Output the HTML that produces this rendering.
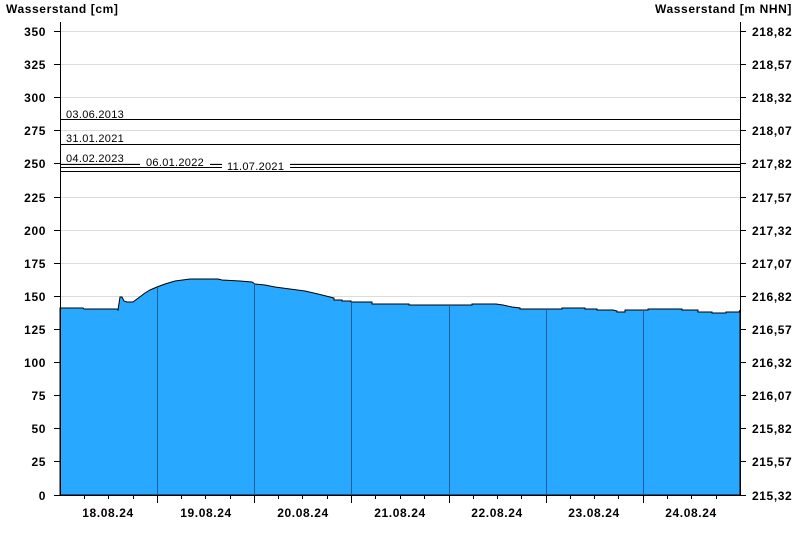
<!DOCTYPE html>
<html><head><meta charset="utf-8"><style>
html,body{margin:0;padding:0;background:#fff;width:800px;height:550px;overflow:hidden}
svg{display:block;font-family:"Liberation Sans",sans-serif}
.b{font-weight:bold;font-size:12px;fill:#000;letter-spacing:0.6px}
.t{font-size:11px;fill:#000;letter-spacing:0.3px}
</style></head><body>
<svg width="800" height="550" viewBox="0 0 800 550">
<g stroke="#dcdcdc" stroke-width="1">
<line x1="60" y1="31.5" x2="740" y2="31.5"/><line x1="60" y1="64.5" x2="740" y2="64.5"/>
<line x1="60" y1="97.5" x2="740" y2="97.5"/><line x1="60" y1="130.5" x2="740" y2="130.5"/>
<line x1="60" y1="163.5" x2="740" y2="163.5"/><line x1="60" y1="197.5" x2="740" y2="197.5"/>
<line x1="60" y1="230.5" x2="740" y2="230.5"/><line x1="60" y1="263.5" x2="740" y2="263.5"/>
<line x1="60" y1="296.5" x2="740" y2="296.5"/>
</g>
<path fill="#29a8ff" stroke="#000" stroke-width="1" d="M60,495 L60,308 L83,308 L84,309 L117,309 L118,310 L120,297 L122,297 L124,301 L127,302 L133,302 L137,299 L141,296 L145,293 L150,290 L157,287 L165,284 L175,281 L190,279 L218,279 L222,280 L240,281 L252,282 L255,284 L265,285 L275,287 L290,289 L305,291 L318,294 L330,297 L334,298 L334,300 L342,300 L342,301 L351,301 L351,302 L372,302 L372,304 L409,304 L409,305 L472,305 L472,304 L496,304 L503,305 L512,307 L520,308 L520,309 L562,309 L562,308 L585,308 L585,309 L597,309 L597,310 L613,310 L617,311 L617,312 L625,312 L625,310 L648,310 L648,309 L682,309 L682,310 L698,310 L698,312 L712,312 L712,313 L726,313 L726,312 L739,312 L740,310 L740,495 Z"/>
<g stroke="#1f5f95" stroke-width="1">
<line x1="157.5" y1="287" x2="157.5" y2="495"/><line x1="254.5" y1="283" x2="254.5" y2="495"/>
<line x1="351.5" y1="302" x2="351.5" y2="495"/><line x1="449.5" y1="305" x2="449.5" y2="495"/>
<line x1="546.5" y1="309" x2="546.5" y2="495"/><line x1="643.5" y1="310" x2="643.5" y2="495"/>
</g>
<g stroke="#000" stroke-width="1">
<line x1="60" y1="119.5" x2="740" y2="119.5"/>
<line x1="60" y1="144.5" x2="740" y2="144.5"/>
<line x1="60" y1="164.5" x2="740" y2="164.5"/>
<line x1="60" y1="167.5" x2="740" y2="167.5"/>
<line x1="60" y1="171.5" x2="740" y2="171.5"/>
</g>
<rect x="140" y="156" width="70" height="11" fill="#fff"/>
<rect x="222" y="160" width="68" height="11" fill="#fff"/>
<text class="t" x="66" y="118">03.06.2013</text>
<text class="t" x="66" y="142">31.01.2021</text>
<text class="t" x="66" y="162">04.02.2023</text>
<text class="t" x="146" y="166">06.01.2022</text>
<text class="t" x="227" y="170">11.07.2021</text>
<g stroke="#000" stroke-width="1">
<line x1="60.5" y1="22" x2="60.5" y2="495"/>
<line x1="740.5" y1="22" x2="740.5" y2="495"/>
<line x1="60" y1="495.5" x2="741" y2="495.5"/>
</g>
<g stroke="#000" stroke-width="1">
<path d="M54,31.5h6M54,64.5h6M54,97.5h6M54,130.5h6M54,163.5h6M54,197.5h6M54,230.5h6M54,263.5h6M54,296.5h6M54,329.5h6M54,362.5h6M54,395.5h6M54,428.5h6M54,461.5h6M54,495.5h6"/>
<path d="M740,31.5h6M740,64.5h6M740,97.5h6M740,130.5h6M740,163.5h6M740,197.5h6M740,230.5h6M740,263.5h6M740,296.5h6M740,329.5h6M740,362.5h6M740,395.5h6M740,428.5h6M740,461.5h6M740,495.5h6"/>
<path d="M157.5,495v8M254.5,495v8M351.5,495v8M449.5,495v8M546.5,495v8M643.5,495v8"/>
<path d="M84.5,495v4M108.5,495v4M133.5,495v4M181.5,495v4M205.5,495v4M230.5,495v4M278.5,495v4M302.5,495v4M327.5,495v4M375.5,495v4M400.5,495v4M424.5,495v4M473.5,495v4M497.5,495v4M521.5,495v4M570.5,495v4M594.5,495v4M618.5,495v4M667.5,495v4M691.5,495v4M716.5,495v4"/>
</g>
<text class="b" x="6" y="13">Wasserstand [cm]</text>
<text class="b" x="792" y="13" text-anchor="end">Wasserstand [m NHN]</text>
<g class="b" text-anchor="end">
<text x="46" y="36">350</text><text x="46" y="69">325</text><text x="46" y="102">300</text><text x="46" y="135">275</text><text x="46" y="168">250</text><text x="46" y="202">225</text><text x="46" y="235">200</text><text x="46" y="268">175</text><text x="46" y="301">150</text><text x="46" y="334">125</text><text x="46" y="367">100</text><text x="46" y="400">75</text><text x="46" y="433">50</text><text x="46" y="466">25</text><text x="46" y="500">0</text>
</g>
<g class="b">
<text x="752" y="36">218,82</text><text x="752" y="69">218,57</text><text x="752" y="102">218,32</text><text x="752" y="135">218,07</text><text x="752" y="168">217,82</text><text x="752" y="202">217,57</text><text x="752" y="235">217,32</text><text x="752" y="268">217,07</text><text x="752" y="301">216,82</text><text x="752" y="334">216,57</text><text x="752" y="367">216,32</text><text x="752" y="400">216,07</text><text x="752" y="433">215,82</text><text x="752" y="466">215,57</text><text x="752" y="500">215,32</text>
</g>
<g class="b" text-anchor="middle">
<text x="108" y="517">18.08.24</text><text x="206" y="517">19.08.24</text><text x="303" y="517">20.08.24</text><text x="400" y="517">21.08.24</text><text x="497" y="517">22.08.24</text><text x="594" y="517">23.08.24</text><text x="691" y="517">24.08.24</text>
</g>
</svg>
</body></html>
